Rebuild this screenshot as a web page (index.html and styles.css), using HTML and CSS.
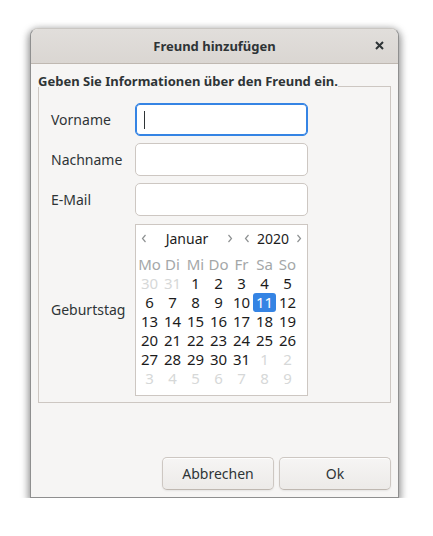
FILE: index.html
```html
<!DOCTYPE html>
<html lang="de">
<head>
<meta charset="utf-8">
<title>Freund hinzufügen</title>
<link rel="stylesheet" href="styles.css">
</head>
<body>
<div class="window">
  <div class="titlebar">
    <span class="title">Freund hinzufügen</span>
    <span class="close"><svg width="9" height="9" viewBox="0 0 9 9"><path d="M1 1 L8 8 M8 1 L1 8" stroke="#2e3436" stroke-width="2" stroke-linecap="butt"/></svg></span>
  </div>
  <div class="content">
    <div class="frame">
      <div class="frame-head"><span class="frame-label">Geben Sie Informationen über den Freund ein.</span><span class="frame-line"></span></div>
      <div class="frame-body">
        <div class="form">
          <span class="label">Vorname</span>
          <div class="entry focused"><span class="cursor"></span></div>
          <span class="label">Nachname</span>
          <div class="entry"></div>
          <span class="label">E-Mail</span>
          <div class="entry"></div>
          <span class="label">Geburtstag</span>
          <div class="calendar">
            <div class="cal-head">
              <div class="cal-month">
                <span class="arrow"><svg width="6" height="9" viewBox="0 0 6 9"><path d="M4.5 1 L1.5 4.5 L4.5 8" fill="none" stroke="#8e9192" stroke-width="1.2"/></svg></span>
                <span class="cal-title">Januar</span>
                <span class="arrow"><svg width="6" height="9" viewBox="0 0 6 9"><path d="M1.5 1 L4.5 4.5 L1.5 8" fill="none" stroke="#8e9192" stroke-width="1.2"/></svg></span>
              </div>
              <div class="cal-year">
                <span class="arrow"><svg width="6" height="9" viewBox="0 0 6 9"><path d="M4.5 1 L1.5 4.5 L4.5 8" fill="none" stroke="#8e9192" stroke-width="1.2"/></svg></span>
                <span class="cal-title">2020</span>
                <span class="arrow"><svg width="6" height="9" viewBox="0 0 6 9"><path d="M1.5 1 L4.5 4.5 L1.5 8" fill="none" stroke="#8e9192" stroke-width="1.2"/></svg></span>
              </div>
            </div>
            <div class="cal-grid">
              <span class="wd">Mo</span><span class="wd">Di</span><span class="wd">Mi</span><span class="wd">Do</span><span class="wd">Fr</span><span class="wd">Sa</span><span class="wd">So</span>
              <span class="day other">30</span><span class="day other">31</span><span class="day">1</span><span class="day">2</span><span class="day">3</span><span class="day">4</span><span class="day">5</span>
              <span class="day">6</span><span class="day">7</span><span class="day">8</span><span class="day">9</span><span class="day">10</span><span class="day selected">11</span><span class="day">12</span>
              <span class="day">13</span><span class="day">14</span><span class="day">15</span><span class="day">16</span><span class="day">17</span><span class="day">18</span><span class="day">19</span>
              <span class="day">20</span><span class="day">21</span><span class="day">22</span><span class="day">23</span><span class="day">24</span><span class="day">25</span><span class="day">26</span>
              <span class="day">27</span><span class="day">28</span><span class="day">29</span><span class="day">30</span><span class="day">31</span><span class="day other">1</span><span class="day other">2</span>
              <span class="day other">3</span><span class="day other">4</span><span class="day other">5</span><span class="day other">6</span><span class="day other">7</span><span class="day other">8</span><span class="day other">9</span>
            </div>
          </div>
        </div>
      </div>
    </div>
    <div class="actions">
      <button class="btn">Abbrechen</button>
      <button class="btn">Ok</button>
    </div>
  </div>
</div>
</body>
</html>
```

FILE: styles.css
```css
* { box-sizing: border-box; }
html, body {
  margin: 0;
  padding: 0;
  background: #ffffff;
}
body {
  font-family: "Noto Sans", "Open Sans", sans-serif;
  color: #2e3436;
  font-size: 14px;
}
.window {
  margin: 28px 0 0 30px;
  width: 369px;
  height: 470px;
  background: #f6f5f4;
  border: 1px solid #8f8f8f;
  border-top-color: #c9c6c2;
  border-radius: 8px 8px 0 0;
  box-shadow: 0 3px 9px 1px rgba(0,0,0,0.35), 0 2px 6px 2px rgba(0,0,0,0.15);
  display: flex;
  flex-direction: column;
}
.titlebar {
  height: 35px;
  flex: none;
  border-bottom: 1px solid #bfb8b1;
  border-radius: 7px 7px 0 0;
  background: linear-gradient(to top, #dad6d2, #e1dedb);
  display: flex;
  align-items: center;
  justify-content: center;
  position: relative;
}
.title {
  font-weight: bold;
  font-size: 13px;
  color: #2e3436;
  margin-top: -1px;
}
.close {
  position: absolute;
  right: 14px;
  top: 12px;
  width: 9px;
  height: 9px;
  display: flex;
}
.content {
  flex: 1;
  display: flex;
  flex-direction: column;
  padding: 9px 7px 7px 7px;
}
.frame { flex: none; }
.frame-head {
  display: flex;
  align-items: flex-end;
  height: 14px;
}
.frame-label {
  font-weight: bold;
  font-size: 13px;
  line-height: 14px;
  white-space: nowrap;
  color: #2e3436;
  position: relative;
  top: 1px;
}
.frame-line {
  flex: 1;
  height: 1px;
  background: #cdc7c2;
}
.frame-body {
  border: 1px solid #cdc7c2;
  border-top: none;
  padding: 16px 12px 6px 12px;
}
.form {
  display: grid;
  grid-template-columns: 74px 173px;
  column-gap: 10px;
  row-gap: 7px;
  align-items: center;
}
.label {
  font-size: 14px;
  color: #2e3436;
}
.entry {
  height: 33px;
  background: #ffffff;
  border: 1px solid #cdc7c2;
  border-radius: 5px;
  display: flex;
  align-items: center;
  padding-left: 8px;
}
.entry.focused {
  border-color: #3584e4;
  box-shadow: inset 0 0 0 1px #3584e4;
}
.cursor {
  width: 1px;
  height: 18px;
  background: #2e3436;
}
.calendar {
  margin-top: 1px;
  height: 172px;
  background: #ffffff;
  border: 1px solid #cdc7c2;
  padding: 0 2px;
  color: #1c1c1c;
}
.cal-head {
  display: flex;
  height: 27px;
  align-items: center;
}
.cal-month {
  width: 97px;
  display: flex;
  align-items: center;
  padding: 0 2px 0 3px;
}
.cal-year {
  flex: 1;
  display: flex;
  align-items: center;
  padding: 0 3px 0 9px;
}
.arrow { display: flex; width: 6px; height: 9px; }
.cal-title {
  flex: 1;
  text-align: center;
  font-size: 14px;
  color: #1c1c1c;
}
.cal-grid {
  display: grid;
  grid-template-columns: repeat(7, 23px);
  grid-auto-rows: 19px;
  padding-top: 3px;
}
.wd, .day {
  display: flex;
  align-items: center;
  justify-content: center;
  font-size: 15px;
  line-height: 19px;
}
.wd { color: #a4a7a8; }
.day.other { color: #d6d8d8; }
.day.selected {
  background: #3584e4;
  color: #ffffff;
  border-radius: 3px;
}
.actions {
  margin-top: auto;
  display: flex;
  justify-content: flex-end;
  gap: 5px;
}
.btn {
  width: 112px;
  height: 33px;
  font-family: "Noto Sans", "Open Sans", sans-serif;
  font-size: 14px;
  color: #2e3436;
  border: 1px solid #cdc7c2;
  border-bottom-color: #bfb8b1;
  border-radius: 5px;
  background: linear-gradient(to top, #edebe9 2px, #f6f5f4);
  box-shadow: inset 0 1px rgba(255,255,255,0.8), 0 1px 2px rgba(0,0,0,0.07);
  padding: 0;
}
```
